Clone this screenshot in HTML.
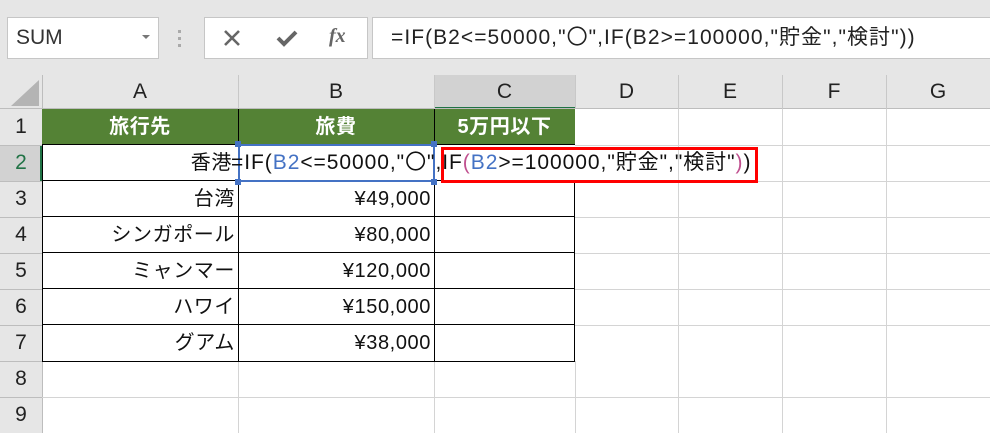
<!DOCTYPE html>
<html><head><meta charset="utf-8"><style>
*{margin:0;padding:0;box-sizing:border-box}
body{width:990px;height:433px;overflow:hidden;background:#fff;position:relative;font-family:"Liberation Sans","Noto Sans CJK JP",sans-serif;}
.a{position:absolute}
.hl{position:absolute;height:1px;background:#d4d4d4}
.vl{position:absolute;width:1px;background:#d4d4d4}
.ch{position:absolute;top:75px;height:34px;line-height:34px;text-align:center;font-size:21px;color:#222}
.rh{position:absolute;left:0;width:42px;height:36px;line-height:36px;text-align:center;font-size:21px;color:#222}
.c{position:absolute;height:36px;line-height:36px;font-size:20px;color:#111;white-space:nowrap;letter-spacing:0.6px}
</style></head><body>
<div class="a" style="left:0;top:0;width:990px;height:75px;background:#e6e6e6"></div>
<div class="a" style="left:7px;top:17px;width:152px;height:42px;background:#fff;border:1px solid #c6c6c6;font-size:21px;line-height:40px;padding-left:8px;color:#333">SUM</div>
<div class="a" style="left:142px;top:35px;width:0;height:0;border-left:4px solid transparent;border-right:4px solid transparent;border-top:4px solid #777"></div>
<div class="a" style="left:178px;top:30px;width:3px;height:3px;background:#aaa"></div>
<div class="a" style="left:178px;top:37px;width:3px;height:3px;background:#aaa"></div>
<div class="a" style="left:178px;top:44px;width:3px;height:3px;background:#aaa"></div>
<div class="a" style="left:204px;top:17px;width:164px;height:42px;background:#fff;border:1px solid #c6c6c6"></div>
<svg class="a" style="left:222px;top:28px" width="20" height="20"><path d="M3 3L17 17M17 3L3 17" stroke="#666" stroke-width="2.6"/></svg>
<svg class="a" style="left:275px;top:28px" width="24" height="20"><path d="M3 10L9 16L21 4" stroke="#666" stroke-width="4" fill="none"/></svg>
<div class="a" style="left:329px;top:25px;font-family:'Liberation Serif',serif;font-style:italic;font-weight:bold;font-size:20px;color:#666">fx</div>
<div class="a" style="left:372px;top:17px;width:620px;height:42px;background:#fff;border:1px solid #c6c6c6;font-size:21px;line-height:40px;padding-left:18px;color:#222;white-space:nowrap;letter-spacing:1.05px">=IF(B2&lt;=50000,"〇",IF(B2&gt;=100000,"貯金","検討"))</div>

<div class="a" style="left:0;top:75px;width:990px;height:34px;background:#e6e6e6"></div>
<div class="a" style="left:0;top:109px;width:42px;height:324px;background:#e6e6e6"></div>
<svg class="a" style="left:10px;top:79px" width="30" height="28"><path d="M29 1L29 27L1 27Z" fill="#b4b4b4"/></svg>
<div class="a" style="left:434px;top:75px;width:141px;height:34px;background:#d2d2d2"></div>
<div class="a" style="left:434px;top:107px;width:141px;height:2px;background:#217346"></div>
<div class="a" style="left:0;top:145px;width:42px;height:36px;background:#d2d2d2"></div>
<div class="a" style="left:40px;top:145px;width:2px;height:36px;background:#217346"></div>
<div class="vl" style="left:42px;top:75px;height:358px;background:#bdbdbd"></div>
<div class="hl" style="left:0;top:108px;width:990px;background:#bdbdbd"></div>

<div class="ch" style="left:42px;width:196px">A</div>
<div class="ch" style="left:238px;width:196px">B</div>
<div class="ch" style="left:434px;width:141px">C</div>
<div class="ch" style="left:575px;width:103px">D</div>
<div class="ch" style="left:678px;width:104px">E</div>
<div class="ch" style="left:782px;width:104px">F</div>
<div class="ch" style="left:886px;width:104px">G</div>
<div class="vl" style="left:238px;top:75px;height:34px;background:#c8c8c8"></div>
<div class="vl" style="left:434px;top:75px;height:34px;background:#c8c8c8"></div>
<div class="vl" style="left:575px;top:75px;height:34px;background:#c8c8c8"></div>
<div class="vl" style="left:678px;top:75px;height:34px;background:#c8c8c8"></div>
<div class="vl" style="left:782px;top:75px;height:34px;background:#c8c8c8"></div>
<div class="vl" style="left:886px;top:75px;height:34px;background:#c8c8c8"></div>

<div class="vl" style="left:678px;top:109px;height:324px"></div>
<div class="vl" style="left:782px;top:109px;height:324px"></div>
<div class="vl" style="left:886px;top:109px;height:324px"></div>
<div class="vl" style="left:238px;top:361px;height:72px"></div>
<div class="vl" style="left:434px;top:361px;height:72px"></div>
<div class="vl" style="left:575px;top:361px;height:72px"></div>
<div class="hl" style="left:575px;top:145px;width:415px"></div>
<div class="hl" style="left:575px;top:181px;width:415px"></div>
<div class="hl" style="left:575px;top:217px;width:415px"></div>
<div class="hl" style="left:575px;top:253px;width:415px"></div>
<div class="hl" style="left:575px;top:289px;width:415px"></div>
<div class="hl" style="left:575px;top:325px;width:415px"></div>
<div class="hl" style="left:42px;top:397px;width:948px"></div>
<div class="hl" style="left:0;top:145px;width:42px;background:#bdbdbd"></div>
<div class="hl" style="left:0;top:181px;width:42px;background:#bdbdbd"></div>
<div class="hl" style="left:0;top:217px;width:42px;background:#bdbdbd"></div>
<div class="hl" style="left:0;top:253px;width:42px;background:#bdbdbd"></div>
<div class="hl" style="left:0;top:289px;width:42px;background:#bdbdbd"></div>
<div class="hl" style="left:0;top:325px;width:42px;background:#bdbdbd"></div>
<div class="hl" style="left:0;top:361px;width:42px;background:#bdbdbd"></div>
<div class="hl" style="left:0;top:397px;width:42px;background:#bdbdbd"></div>

<div class="a" style="left:42px;top:109px;width:533px;height:36px;background:#548235"></div>
<div class="a" style="left:42px;top:144px;width:533px;height:218px;border:1px solid #000;border-top:none"></div>
<div class="a" style="left:42px;top:180px;width:533px;height:1px;background:#000"></div>
<div class="a" style="left:42px;top:216px;width:533px;height:1px;background:#000"></div>
<div class="a" style="left:42px;top:252px;width:533px;height:1px;background:#000"></div>
<div class="a" style="left:42px;top:288px;width:533px;height:1px;background:#000"></div>
<div class="a" style="left:42px;top:324px;width:533px;height:1px;background:#000"></div>
<div class="a" style="left:42px;top:144px;width:533px;height:1px;background:#000"></div>
<div class="a" style="left:238px;top:109px;width:1px;height:253px;background:#000"></div>
<div class="a" style="left:434px;top:109px;width:1px;height:253px;background:#000"></div>

<div class="rh" style="top:109px">1</div><div class="rh" style="top:145px;color:#217346">2</div>
<div class="rh" style="top:181px">3</div><div class="rh" style="top:217px">4</div>
<div class="rh" style="top:253px">5</div><div class="rh" style="top:289px">6</div>
<div class="rh" style="top:325px">7</div><div class="rh" style="top:361px">8</div>
<div class="rh" style="top:397px">9</div>

<div class="c" style="left:42px;top:109px;width:196px;text-align:center;color:#fff;font-weight:bold">旅行先</div>
<div class="c" style="left:238px;top:109px;width:196px;text-align:center;color:#fff;font-weight:bold">旅費</div>
<div class="c" style="left:434px;top:109px;width:141px;text-align:center;color:#fff;font-weight:bold">5万円以下</div>

<div class="c" style="left:42px;top:181px;width:193px;text-align:right">台湾</div>
<div class="c" style="left:42px;top:217px;width:193px;text-align:right">シンガポール</div>
<div class="c" style="left:42px;top:253px;width:193px;text-align:right">ミャンマー</div>
<div class="c" style="left:42px;top:289px;width:193px;text-align:right">ハワイ</div>
<div class="c" style="left:42px;top:325px;width:193px;text-align:right">グアム</div>
<div class="c" style="left:238px;top:181px;width:193px;text-align:right">¥49,000</div>
<div class="c" style="left:238px;top:217px;width:193px;text-align:right">¥80,000</div>
<div class="c" style="left:238px;top:253px;width:193px;text-align:right">¥120,000</div>
<div class="c" style="left:238px;top:289px;width:193px;text-align:right">¥150,000</div>
<div class="c" style="left:238px;top:325px;width:193px;text-align:right">¥38,000</div>

<div class="a" style="left:43px;top:145px;width:532px;height:35px;background:#fff"></div>
<div class="c" style="left:42px;top:145px;width:190px;text-align:right;overflow:hidden">香港</div>
<div class="a" style="left:238px;top:144px;width:197px;height:38px;border:2px solid #4472c4"></div>
<div class="a" style="left:235px;top:141px;width:6px;height:6px;background:#4472c4"></div>
<div class="a" style="left:431px;top:141px;width:6px;height:6px;background:#4472c4"></div>
<div class="a" style="left:235px;top:179px;width:6px;height:6px;background:#4472c4"></div>
<div class="a" style="left:431px;top:179px;width:6px;height:6px;background:#4472c4"></div>
<div class="a" style="left:441px;top:147px;width:317px;height:36px;border:3px solid #ff0000"></div>
<div class="c" style="left:231px;top:145px;font-size:21px;letter-spacing:0.95px;background:transparent">=IF(<span style="color:#4472c4">B2</span>&lt;=50000,"〇",IF<span style="color:#c0508f">(</span><span style="color:#4472c4">B2</span>&gt;=100000,"貯金","検討"<span style="color:#c0508f">)</span>)</div>
</body></html>
